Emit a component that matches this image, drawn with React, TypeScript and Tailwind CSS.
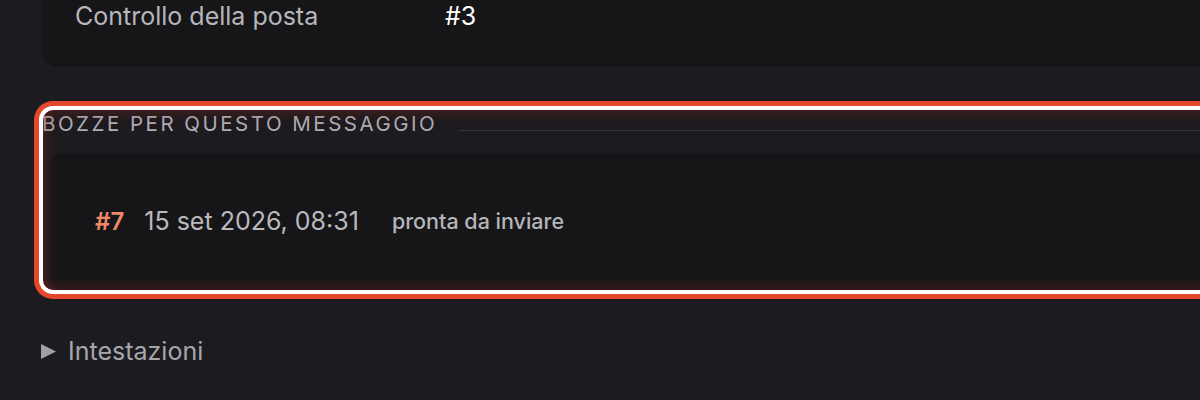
import React from 'react';

export default function App() {
  return (
    <div className="h-[400px] w-[1200px] overflow-hidden bg-[#1c1b1f] pl-[42px] font-['Inter',sans-serif]">
      <div className="-mt-[24px] flex h-[91px] w-[1200px] items-end rounded-2xl bg-[#161618] pb-[35px] pl-[33px] text-[25px] leading-[32px]">
        <span className="w-[370px] text-[#b6b6bc]">Controllo della posta</span>
        <span className="text-white">#3</span>
      </div>

      <section className="relative ml-px mt-[43px] flex h-[180px] w-[1200px] flex-col rounded-[10px] shadow-[0_0_0_4px_#ffffff,0_0_0_9px_#e4472a]">
        <div className="flex h-[28px] items-center gap-[22px] -ml-px">
          <h3 className="text-[20.5px] font-normal uppercase tracking-[0.122em] text-[#aeaeb4]">Bozze per questo messaggio</h3>
          <div className="mt-[12px] h-px flex-1 bg-[#34343a]" />
        </div>
        <div className="ml-[7px] mt-[15px] flex flex-1 items-center gap-[20px] rounded-[12px] bg-[#161618] pl-[45px]">
          <span className="text-[24px] font-semibold text-[#ee8868]">#7</span>
          <span className="text-[25px] text-[#b9b9bf]">15 set 2026, 08:31</span>
          <span className="ml-[13px] text-[21.5px] font-medium text-[#b4b4ba]">pronta da inviare</span>
        </div>
        <div className="pointer-events-none absolute inset-0 rounded-[10px] shadow-[inset_0_0_16px_rgba(140,38,25,0.55)]" />
      </section>

      <div className="mt-[43px] flex items-center gap-[12px]">
        <svg width="15" height="15" viewBox="0 0 15 15" className="-ml-px text-[#a0a0a6]">
          <path d="M0 0 L15 7.5 L0 15 Z" fill="currentColor" />
        </svg>
        <span className="text-[25px] text-[#a6a6ac]">Intestazioni</span>
      </div>
    </div>
  );
}
